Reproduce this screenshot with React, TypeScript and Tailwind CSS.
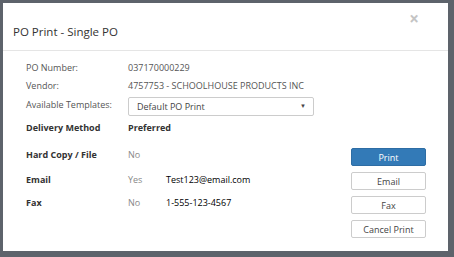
import React from 'react';

const Row: React.FC<{ label: string; children: React.ReactNode; bold?: boolean }> = ({ label, children, bold }) => (
  <div className="flex items-center h-[18px]">
    <span className={`w-[102px] ${bold ? 'font-bold text-[#333]' : 'text-[#555]'}`}>{label}</span>
    <div className="flex-1 flex items-center">{children}</div>
  </div>
);

const Btn: React.FC<{ label: string; primary?: boolean }> = ({ label, primary }) => (
  <button
    className={`w-[75px] h-[18px] rounded-[2px] text-[9px] leading-none ${
      primary ? 'bg-[#337ab7] border border-[#2e6da4] text-white' : 'bg-white border border-[#ccc] text-[#444]'
    }`}
  >
    {label}
  </button>
);

const App: React.FC = () => {
  return (
    <div className="w-[454px] h-[257px] bg-[#5d636b] pt-[3px] pl-[3px]" style={{ fontFamily: '"Open Sans", sans-serif' }}>
      <div className="w-[445px] h-[248px] bg-white text-[9px] text-[#333]">
        <div className="flex justify-between h-[48px] pl-[10px] pr-[29px] border-b border-[#e5e5e5]">
          <h2 className="self-end pb-[10px] text-[11.5px] text-[#333]">PO Print - Single PO</h2>
          <span className="self-start mt-[7px] text-[17px] font-bold text-[#c4c4c4] leading-none">×</span>
        </div>
        <div className="pl-[23px] pt-[8px] flex flex-col">
          <Row label="PO Number:"><span className="text-[#555]">037170000229</span></Row>
          <Row label="Vendor:"><span className="text-[#555]">4757753 - SCHOOLHOUSE PRODUCTS INC</span></Row>
          <div className="flex items-center h-[18px] mt-[1px]">
            <span className="w-[102px] text-[#555]">Available Templates:</span>
            <div className="w-[186px] h-[19px] mt-[3px] border border-[#ccc] rounded-[2px] flex items-center justify-between pl-[8px] pr-[7px] text-[#444]">
              <span>Default PO Print</span>
              <span className="text-[6px]">▼</span>
            </div>
          </div>
          <div className="flex">
            <div className="flex-1 flex flex-col pt-[5px]">
              <Row label="Delivery Method" bold><span className="font-bold text-[#333]">Preferred</span></Row>
              <div className="h-[9px]" />
              <Row label="Hard Copy / File" bold><span className="text-[#888]">No</span></Row>
              <div className="h-[7px]" />
              <Row label="Email" bold>
                <span className="text-[#888] w-[38px]">Yes</span>
                <span className="text-black">Test123@email.com</span>
              </Row>
              <div className="h-[5px]" />
              <Row label="Fax" bold>
                <span className="text-[#888] w-[38px]">No</span>
                <span className="text-black">1-555-123-4567</span>
              </Row>
            </div>
            <div className="flex flex-col gap-[6px] pt-[34px] pr-[22px]">
              <Btn label="Print" primary />
              <Btn label="Email" />
              <Btn label="Fax" />
              <Btn label="Cancel Print" />
            </div>
          </div>
        </div>
      </div>
    </div>
  );
};

export default App;
